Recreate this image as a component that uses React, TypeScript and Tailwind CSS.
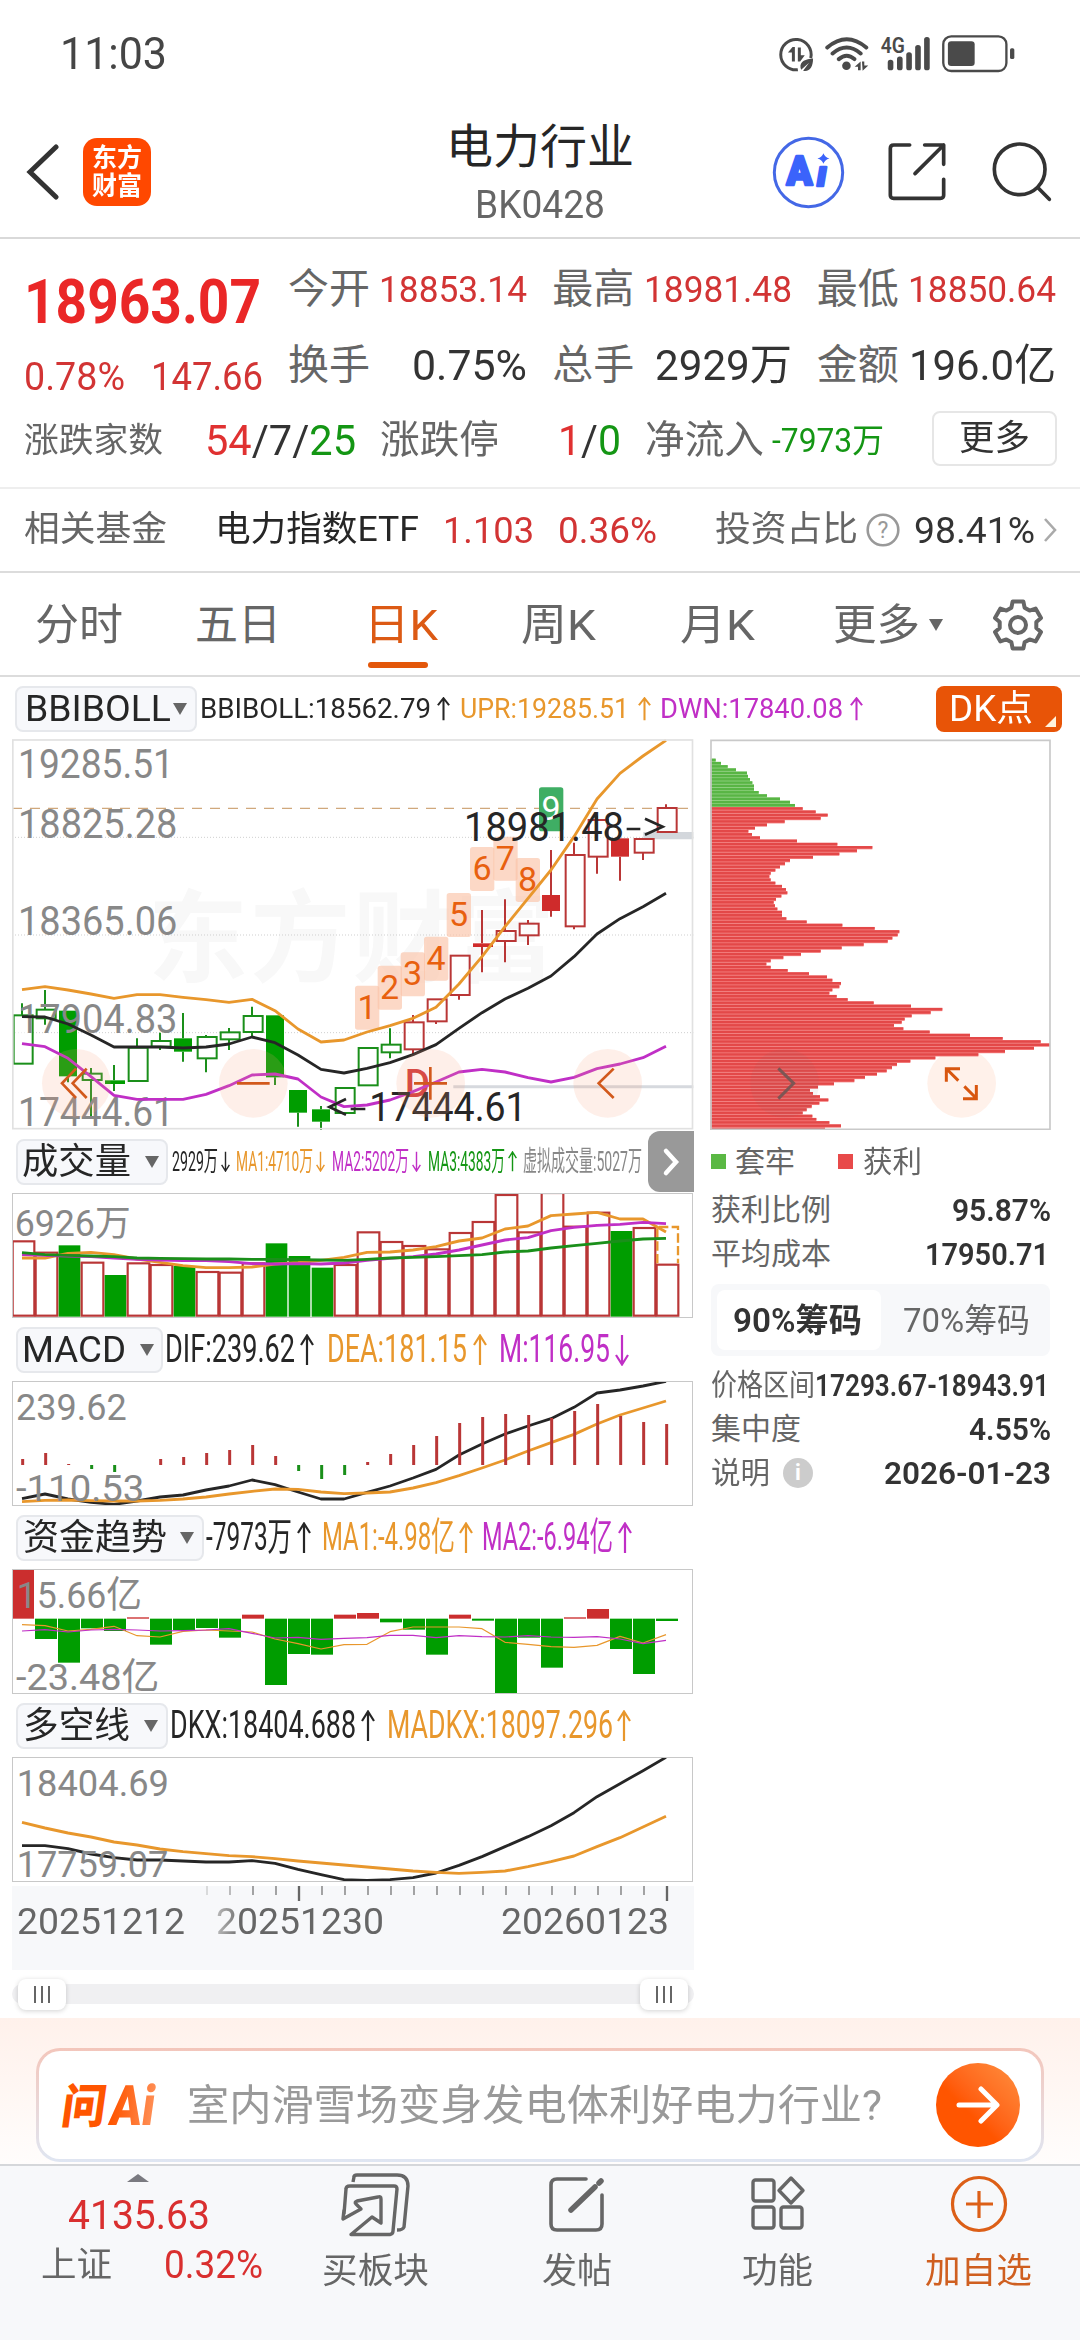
import { useLayoutEffect, useRef } from "react";
import type { ReactNode } from "react";

/* Single-line text squeezed or stretched horizontally to the width of its box. */
function Fit({ className = "", children }: { className?: string; children: ReactNode }) {
  const outer = useRef<HTMLSpanElement>(null);
  const inner = useRef<HTMLSpanElement>(null);
  useLayoutEffect(() => {
    const o = outer.current;
    const i = inner.current;
    if (!o || !i) return;
    i.style.transform = "none";
    const natural = i.getBoundingClientRect().width;
    const target = o.getBoundingClientRect().width;
    if (natural > 0) i.style.transform = `scaleX(${target / natural})`;
  });
  return (
    <span ref={outer} className={`block shrink-0 whitespace-nowrap leading-none ${className}`}>
      <span ref={inner} className="inline-block origin-left leading-none">
        {children}
      </span>
    </span>
  );
}

const RED = "#b93636";
const GREEN = "#1a8f1a";
const ORANGE = "#e8972c";
const MAGENTA = "#c02fc6";
const BLACK = "#262626";

/* Charts use three units per pixel; trading days are 69 units apart. */
const dayX = (i: number) => 66 + 69 * i;
const toPoints = (ys: number[]) => ys.map((y, i) => `${dayX(i)},${y}`).join(" ");

function Line({ ys, color, width = 8.5 }: { ys: number[]; color: string; width?: number }) {
  return <polyline points={toPoints(ys)} fill="none" stroke={color} strokeWidth={width} strokeLinejoin="round" />;
}

function Label({ x, y, w, size, children, color = "#888888" }: { x: number; y: number; w: number; size: number; children: string; color?: string }) {
  return (
    <text x={x} y={y} fontSize={size} fill={color} textLength={w} lengthAdjust="spacingAndGlyphs">
      {children}
    </text>
  );
}

/* high, body top, body bottom, low, kind: G/R filled, g/r hollow */
const candles: [number, number, number, number, string][] = [
  [820, 856, 1001, 1001, "g"], [780, 839, 865, 884, "g"], [842, 842, 1039, 1057, "G"], [1014, 1031, 1050, 1160, "g"],
  [1005, 1051, 1062, 1083, "G"], [925, 953, 1053, 1053, "g"], [908, 933, 950, 960, "g"], [849, 925, 965, 995, "G"],
  [915, 921, 985, 1027, "g"], [894, 907, 928, 960, "g"], [830, 858, 906, 920, "g"], [856, 856, 1042, 1065, "G"],
  [1080, 1080, 1148, 1190, "G"], [1128, 1138, 1175, 1200, "G"], [1073, 1074, 1149, 1149, "g"], [954, 954, 1066, 1066, "g"],
  [895, 944, 967, 985, "g"], [855, 877, 958, 974, "r"], [808, 808, 874, 882, "r"], [677, 677, 795, 809, "r"],
  [540, 640, 651, 727, "R"], [508, 603, 633, 697, "r"], [570, 581, 616, 645, "r"], [360, 495, 543, 560, "R"],
  [338, 375, 589, 598, "r"], [257, 270, 380, 431, "r"], [325, 325, 380, 452, "R"], [327, 327, 368, 390, "r"],
  [223, 234, 306, 306, "r"],
];
const upper = [779, 770, 780, 792, 805, 794, 794, 802, 809, 817, 808, 842, 897, 936, 930, 906, 887, 865, 832, 762, 680, 590, 505, 420, 320, 207, 130, 78, 31];
const middle = [860, 861, 882, 915, 951, 951, 951, 954, 951, 942, 921, 938, 975, 1018, 1029, 1015, 998, 974, 944, 895, 848, 807, 775, 738, 680, 612, 566, 530, 490];
const lower = [941, 950, 985, 1040, 1096, 1108, 1108, 1108, 1093, 1067, 1035, 1032, 1047, 1101, 1130, 1125, 1110, 1085, 1056, 1026, 1018, 1026, 1043, 1056, 1042, 1016, 1002, 983, 949];
const tags: [number, number][] = [
  [1065, 767], [1133, 707], [1202, 667], [1272, 620], [1340, 489], [1410, 351], [1480, 320], [1547, 384], [1617, 172],
];

function Circle({ x }: { x: number }) {
  return <circle cx={x} cy={1060} r={103} fill="#f9a37a" fillOpacity={0.17} />;
}

function MainChart() {
  return (
    <svg viewBox="36 27 2046 1173" className="block h-[391px] w-[682px]">
      <g fontSize={300} fontWeight={700} fill="#f8f8f8">
        {["东", "方", "财", "富"].map((c, i) => (
          <text key={c} x={444 + 307 * i} y={732} textLength={300} lengthAdjust="spacingAndGlyphs">{c}</text>
        ))}
      </g>
      <g stroke="#cfcfcf" strokeWidth={3} strokeDasharray="3 6">
        <path d="M36 322H2080M36 615H2080M36 908H2080" />
      </g>
      <path d="M1360 1070H2080" stroke="#d6d9de" strokeWidth={9} />
      <path d="M1930 317H2080" stroke="#d3d7dc" strokeWidth={22} />
      <path d="M36 235H2070" stroke="#d0a87c" strokeWidth={3.5} strokeDasharray="30 24" />
      {tags.map(([x, y], i) => (
        <g key={i}>
          <rect x={x} y={y} width={73} height={132} rx={8} fill={i === 8 ? "#3fae64" : "#fbc3a8"} fillOpacity={i === 8 ? 1 : 0.65} />
          <text x={x + 36} y={y + 99} fontSize={102} textAnchor="middle" fill={i === 8 ? "#ffffff" : "#e8600f"}>{i + 1}</text>
        </g>
      ))}
      {candles.map(([hi, top, bottom, lo, kind], i) => {
        const filled = kind === "G" || kind === "R";
        const up = kind === "r" || kind === "R";
        const edge = up ? RED : GREEN;
        const fill = filled ? (up ? "#cf2b2b" : "#009d00") : "#ffffff";
        const cx = dayX(i);
        return (
          <g key={i} stroke={edge} strokeWidth={6}>
            <path d={`M${cx} ${hi}V${top}M${cx} ${bottom}V${lo}`} />
            {filled ? (
              <rect x={cx - 27} y={top} width={bottom - top < 14 ? 60 : 54} height={bottom - top} fill={fill} stroke="none" />
            ) : (
              <rect x={cx - 25} y={top} width={57} height={bottom - top} fill="#ffffff" fillOpacity={0.6} />
            )}
          </g>
        );
      })}
      <Label x={54} y={145} w={468} size={124}>19285.51</Label>
      <Label x={54} y={323} w={478} size={124}>18825.28</Label>
      <Label x={54} y={614} w={478} size={124}>18365.06</Label>
      <Label x={54} y={908} w={478} size={124}>17904.83</Label>
      <Label x={54} y={1187} w={468} size={124}>17444.61</Label>
      <text x={1214} y={1102} fontSize={116} fontWeight={500} fill="#d03a3a">D</text>
      <Line ys={upper} color={ORANGE} />
      <Line ys={middle} color={BLACK} />
      <Line ys={lower} color={MAGENTA} />
      <Label x={1392} y={332} w={480} size={121} color={BLACK}>18981.48</Label>
      <path d="M1880 297H1921M1935 266L1988 290L1935 314" fill="none" stroke={BLACK} strokeWidth={8} />
      <Label x={1108} y={1172} w={472} size={121} color={BLACK}>17444.61</Label>
      <path d="M1052 1137H1096M1038 1107L988 1131L1038 1154" fill="none" stroke={BLACK} strokeWidth={8} />
      <Circle x={229} />
      <Circle x={760} />
      <Circle x={1292} />
      <Circle x={1823} />
      <g fill="none" stroke="#d2591c" strokeWidth={8}>
        <path d="M228 1016L186 1060L228 1104M260 1016L218 1060L260 1104" />
        <path d="M711 1060H809" />
        <path d="M1242 1060H1341M1291 1011V1109" />
        <path d="M1841 1016L1796 1060L1841 1104" />
      </g>
      <rect x={38.5} y={30} width={2039} height={1166} fill="none" stroke="#e1e1e1" strokeWidth={5} />
    </svg>
  );
}

/* Right edge of each price level's bar. */
const chips = [
  77, 93, 113, 138, 171, 174, 180, 187, 192, 192, 206, 231, 270, 300, 315, 338, 377, 413, 392, 284, 231, 195, 175, 186, 210, 321,
  442, 547, 501, 448, 369, 300, 285, 270, 256, 242, 238, 242, 256, 276, 288, 292, 274, 258, 251, 255, 262, 276, 276, 289, 350, 457,
  554, 628, 623, 607, 593, 521, 455, 392, 333, 280, 242, 229, 242, 293, 357, 411, 427, 453, 448, 427, 418, 440, 473, 551, 663, 757,
  722, 665, 644, 635, 612, 640, 719, 840, 938, 1052, 1080, 1032, 945, 865, 736, 661, 621, 606, 590, 561, 525, 493, 432, 384, 360,
  369, 390, 415, 388, 365, 350, 338, 367, 379, 418, 453, 405,
];

function ChipChart() {
  return (
    <svg viewBox="60 27 1023 1173" className="block h-[391px] w-[341px]">
      <circle cx={815} cy={1060} r={103} fill="#fff1ea" />
      {chips.map((x, i) => {
        const y = 86 + i * 9.71;
        return (
          <g key={i}>
            <rect x={62} y={y} width={x - 62} height={9.8} fill={i < 15 ? "#8fd07e" : "#f57f7f"} />
            <rect x={62} y={y} width={x - 62} height={7.4} fill={i < 15 ? "#58b544" : "#e34848"} />
          </g>
        );
      })}
      <circle cx={284} cy={1060} r={103} fill="#777777" fillOpacity={0.07} />
      <path d="M265 1015L311 1060L265 1106" fill="none" stroke="#7d5654" strokeWidth={9} />
      <g fill="none" stroke="#d8560f" strokeWidth={9}>
        <path d="M769 1055V1016H810M770 1017L805 1052M823 1069L858 1104M859 1065V1106H819" />
      </g>
      <path d="M63 31V1198H1080V31Z" fill="none" stroke="#c9c9c9" strokeWidth={5} />
    </svg>
  );
}

function Panel({ top, children }: { top: number; children: ReactNode }) {
  return (
    <svg viewBox={`36 ${top} 2046 375`} className="block h-[125px] w-[682px]">
      {children}
      <rect x={37.5} y={top + 1.5} width={2040} height={372} fill="none" stroke="#c8c8c8" strokeWidth={3} />
    </svg>
  );
}

const volume = [334, 368, 346, 398, 435, 400, 405, 408, 426, 428, 400, 340, 378, 413, 405, 307, 336, 348, 358, 309, 276, 195, 307, 189, 290, 248, 303, 294, 404];
const volumeDown = [2, 4, 7, 11, 12, 13, 26];
const vol1 = [384, 384, 370, 367, 374, 387, 397, 407, 413, 413, 411, 402, 398, 391, 382, 367, 366, 360, 350, 333, 324, 297, 288, 257, 252, 247, 267, 267, 306];
const vol2 = [374, 376, 378, 380, 384, 388, 390, 392, 392, 395, 401, 402, 401, 402, 399, 391, 385, 380, 372, 360, 345, 330, 323, 302, 292, 286, 283, 277, 281];
const vol3 = [368, 374, 376, 378, 380, 384, 385, 386, 387, 387, 388, 388, 389, 390, 391, 388, 384, 382, 380, 377, 374, 366, 363, 354, 347, 340, 333, 327, 325];

function VolumeChart() {
  return (
    <Panel top={189}>
      <Label x={44} y={318} w={348} size={110}>6926万</Label>
      {volume.map((y, i) =>
        volumeDown.includes(i) ? (
          <rect key={i} x={38 + 69 * i} y={y} width={65} height={560 - y} fill="#009d00" />
        ) : (
          <rect key={i} x={38 + 69 * i} y={y} width={65} height={557 - y} fill="#ffffff" stroke={RED} strokeWidth={6.5} />
        ),
      )}
      <path d="M1972 400V291H2034V400" fill="none" stroke={ORANGE} strokeWidth={7} strokeDasharray="28 10" />
      <Line ys={vol1} color={ORANGE} />
      <Line ys={vol2} color={MAGENTA} />
      <Line ys={vol3} color={GREEN} />
    </Panel>
  );
}

const macd = [417, 399, 432, 447, 456, 435, 417, 411, 399, 390, 375, 408, 453, 477, 465, 426, 402, 375, 348, 309, 291, 282, 285, 294, 273, 252, 288, 306, 312];
const dif = [536, 522, 537, 547, 553, 543, 531, 525, 510, 498, 480, 494, 516, 537, 537, 517, 498, 474, 448, 405, 372, 342, 318, 296, 262, 219, 210, 198, 184];
const dea = [545, 541, 540, 542, 543, 543, 541, 537, 531, 522, 514, 507, 508, 516, 521, 519, 516, 504, 488, 467, 444, 420, 393, 368, 343, 312, 285, 264, 243];

function MacdChart() {
  return (
    <Panel top={183}>
      <Line ys={dif} color={BLACK} />
      <Line ys={dea} color={ORANGE} />
      {macd.map((y, i) => (
        <path key={i} d={`M${dayX(i) + 2} 435V${y}`} stroke={y > 435 ? GREEN : RED} strokeWidth={9} />
      ))}
      <Label x={48} y={299} w={332} size={112}>239.62</Label>
      <Label x={48} y={543} w={385} size={112}>-110.53</Label>
    </Panel>
  );
}

const fund = [57, 267, 338, 235, 243, 202, 284, 240, 234, 263, 194, 405, 312, 314, 194, 189, 217, 239, 314, 194, 212, 429, 263, 353, 202, 177, 297, 372, 213];
const fund1 = [224, 227, 243, 238, 229, 257, 261, 244, 240, 243, 246, 267, 281, 297, 284, 283, 245, 231, 231, 231, 236, 277, 283, 290, 292, 286, 259, 279, 254];
const fund2 = [243, 239, 246, 240, 238, 240, 243, 242, 240, 236, 250, 264, 262, 268, 265, 263, 256, 256, 263, 257, 260, 261, 257, 261, 262, 260, 267, 281, 271];

function FundChart() {
  return (
    <Panel top={57}>
      {fund.map((y, i) => (
        <rect key={i} x={36 + 69 * i} y={Math.min(y, 206)} width={66} height={Math.abs(206 - y)} fill={y < 206 ? "#cb2e2e" : "#009d00"} />
      ))}
      <Line ys={fund1} color={ORANGE} width={3.5} />
      <Line ys={fund2} color={MAGENTA} width={3.5} />
      <Label x={50} y={175} w={376} size={112}>15.66亿</Label>
      <Label x={48} y={420} w={430} size={112}>-23.48亿</Label>
    </Panel>
  );
}

const dkx = [887, 887, 896, 912, 923, 930, 930, 933, 936, 936, 932, 940, 958, 974, 989, 991, 989, 983, 969, 946, 920, 890, 860, 827, 788, 740, 701, 662, 622];
const madkx = [817, 834, 849, 861, 876, 885, 897, 905, 911, 917, 920, 926, 933, 939, 945, 951, 957, 963, 967, 970, 967, 963, 950, 935, 918, 890, 863, 831, 799];

function DkxChart() {
  return (
    <Panel top={621}>
      <Line ys={dkx} color={BLACK} />
      <Line ys={madkx} color={ORANGE} />
      <Label x={50} y={738} w={457} size={112}>18404.69</Label>
      <Label x={50} y={980} w={455} size={112}>17759.07</Label>
    </Panel>
  );
}

function Arrow({ down = false, className }: { down?: boolean; className: string }) {
  return (
    <svg viewBox="0 0 14 32" fill="none" stroke="currentColor" strokeWidth={2.2} preserveAspectRatio="none" className={`shrink-0 ${className}`}>
      {down ? <path d="M7 1V30M1 21L7 30.5L13 21" /> : <path d="M7 31V2M1 11L7 1.5L13 11" />}
    </svg>
  );
}

function Pill({ className, textClass, triClass, children }: { className: string; textClass: string; triClass: string; children: string }) {
  return (
    <div className={`flex h-[46px] shrink-0 items-center rounded-lg border-2 border-[#e6e8ec] bg-[#f7f8fb] text-[#262626] ${className}`}>
      <Fit className={textClass}>{children}</Fit>
      <svg viewBox="0 0 14 12" className={`h-3 w-[14px] fill-[#666666] ${triClass}`}>
        <path d="M0 0H14L7 12Z" />
      </svg>
    </div>
  );
}

const gear = (() => {
  const p: string[] = [];
  const at = (deg: number, r: number) => {
    const a = (deg * Math.PI) / 180;
    p.push(`${(26 + r * Math.cos(a)).toFixed(1)},${(26 + r * Math.sin(a)).toFixed(1)}`);
  };
  for (let k = 0; k < 6; k++) {
    const c = -90 + 60 * k;
    at(c - 21, 18.5);
    at(c - 13, 24);
    at(c + 13, 24);
    at(c + 21, 18.5);
  }
  return p.join(" ");
})();

function StatusBar() {
  return (
    <div className="flex h-[107px] items-center pl-[60px] text-[#454545]">
      <Fit className="w-[107px] text-[44px]">11:03</Fit>
      <svg viewBox="50 35 720 118" className="ml-[610px] h-[39px] w-[240px]">
        <path d="M149 108A46 46 0 1 0 110 143" fill="none" stroke="#4a4a4a" strokeWidth={9} />
        <g fill="#4a4a4a">
          <path d="M101 118H92V91H80L94 74H101Z" />
          <path d="M110 76H119V99H131L117 118H110Z" />
          <path d="M118 136C116 118 134 110 156 109C156 134 146 150 126 146L144 122L120 143Z" />
        </g>
        <g fill="none" stroke="#4a4a4a" strokeWidth={12} strokeLinecap="round">
          <path d="M199 76Q258 26 317 76M215 94Q258 58 300 94M234 111Q258 91 281 111" />
        </g>
        <circle cx={257} cy={131} r={13} fill="#4a4a4a" />
        <path d="M282 134L300 118V145H292V134ZM304 118H311V130H323L306 146Z" fill="#4a4a4a" />
        <text x={361} y={94} fontSize={64} fontWeight={600} fill="#4a4a4a" textLength={73} lengthAdjust="spacingAndGlyphs">4G</text>
        <g fill="#4a4a4a">
          <rect x={382} y={113} width={17} height={32} rx={8} />
          <rect x={410} y={103} width={17} height={42} rx={8} />
          <rect x={438} y={90} width={17} height={55} rx={8} />
          <rect x={465} y={68} width={17} height={77} rx={8} />
          <rect x={492} y={44} width={17} height={101} rx={8} />
          <rect x={564} y={57} width={81} height={75} rx={10} />
          <rect x={752} y={78} width={13} height={33} rx={5} />
        </g>
        <rect x={550} y={42} width={191} height={105} rx={24} fill="none" stroke="#4a4a4a" strokeWidth={7} />
      </svg>
    </div>
  );
}

function Header() {
  return (
    <header className="flex h-[132px] border-b-2 border-[#d9d9d9]">
      <div className="flex w-[330px] items-center pl-[26px]">
        <svg viewBox="0 0 33 58" className="h-[58px] w-[33px]" fill="none" stroke="#333333" strokeWidth={5} strokeLinecap="round">
          <path d="M30 4L4 29L30 54" />
        </svg>
        <div className="ml-6 flex h-[68px] w-[68px] flex-col items-center justify-center gap-0.5 rounded-[14px] bg-[#ff4800] text-[26px] font-semibold text-white">
          <Fit className="w-[50px]">东方</Fit>
          <Fit className="w-[50px]">财富</Fit>
        </div>
      </div>
      <div className="flex flex-1 flex-col items-center pt-[16px]">
        <Fit className="w-[188px] text-[47px] text-[#262626]">电力行业</Fit>
        <Fit className="mt-[16px] w-[130px] text-[38px] text-[#666666]">BK0428</Fit>
      </div>
      <div className="flex w-[330px] items-center pl-[22px]">
        <svg viewBox="36 344 220 220" className="h-[73px] w-[73px]">
          <circle cx={146} cy={454} r={103} fill="none" stroke="#4468e6" strokeWidth={9} />
          <g fill="#3b63fb" stroke="#3b63fb" strokeWidth={8} strokeLinejoin="round" fontWeight={900}>
            <text x={80} y={492} fontSize={122} textLength={78} lengthAdjust="spacingAndGlyphs">A</text>
            <text x={172} y={496} fontSize={105} fontStyle="italic">ı</text>
          </g>
          <path d="M191 396Q195 408 209 412Q195 416 191 428Q187 416 173 412Q187 408 191 396Z" fill="#3b63fb" />
        </svg>
        <svg viewBox="380 365 180 180" className="ml-[42px] h-[60px] w-[60px]" fill="none" stroke="#333333" strokeWidth={11} strokeLinecap="round" strokeLinejoin="round">
          <path d="M448 374H400Q390 374 390 384V525Q390 534 400 534H540Q550 534 550 525V477M493 374H550V432M550 374L464 460" />
        </svg>
        <svg viewBox="690 360 186 186" className="ml-11 h-[62px] w-[62px]" fill="none" stroke="#333333" strokeWidth={11} strokeLinecap="round">
          <circle cx={776} cy={445} r={76} />
          <path d="M831 500L865 535" />
        </svg>
      </div>
    </header>
  );
}

function Stat({ label, value, valueClass }: { label: string; value: string; valueClass: string }) {
  return (
    <div className="flex h-[42px] items-center justify-between">
      <Fit className="w-[82px] text-[41px] text-[#666666]">{label}</Fit>
      <Fit className={valueClass}>{value}</Fit>
    </div>
  );
}

function Quote() {
  return (
    <section className="h-[250px] border-b-2 border-[#eeeeee]">
      <div className="flex h-[163px] pl-[24px]">
        <div className="w-[264px] pt-[32px]">
          <Fit className="w-[237px] text-[62px] font-bold text-[#ea2727]">18963.07</Fit>
          <div className="mt-[25px] flex gap-[26px] text-[39px] text-[#d23434]">
            <Fit className="w-[101px]">0.78%</Fit>
            <Fit className="w-[112px]">147.66</Fit>
          </div>
        </div>
        <div className="grid w-[768px] grid-cols-3 content-start gap-x-[25px] gap-y-[34px] pt-[29px]">
          <Stat label="今开" value="18853.14" valueClass="w-[148px] text-[37px] text-[#d23434]" />
          <Stat label="最高" value="18981.48" valueClass="w-[148px] text-[37px] text-[#d23434]" />
          <Stat label="最低" value="18850.64" valueClass="w-[148px] text-[37px] text-[#d23434]" />
          <Stat label="换手" value="0.75%" valueClass="w-[115px] text-[43px] text-[#333333]" />
          <Stat label="总手" value="2929万" valueClass="w-[137px] text-[43px] text-[#333333]" />
          <Stat label="金额" value="196.0亿" valueClass="w-[147px] text-[43px] text-[#333333]" />
        </div>
      </div>
      <div className="flex h-[72px] items-center pl-[24px]">
        <Fit className="mt-1 w-[139px] text-[34.5px] text-[#666666]">涨跌家数</Fit>
        <Fit className="mt-1 ml-[42px] w-[151px] text-[43px] text-[#333333]">
          <span className="text-[#e03131]">54</span>/7/<span className="text-[#149614]">25</span>
        </Fit>
        <Fit className="mt-1 ml-6 w-[119px] text-[39px] text-[#666666]">涨跌停</Fit>
        <Fit className="mt-1 ml-[59px] w-[63px] text-[43px] text-[#333333]">
          <span className="text-[#e03131]">1</span>/<span className="text-[#149614]">0</span>
        </Fit>
        <Fit className="mt-1 ml-6 w-[119px] text-[39px] text-[#666666]">净流入</Fit>
        <Fit className="mt-1 ml-2 w-[112px] text-[33px] text-[#149614]">-7973万</Fit>
        <div className="ml-12 flex h-[55px] w-[125px] items-center justify-center rounded-lg border-2 border-[#e6e6e6] text-[#333333]">
          <Fit className="w-[71px] text-[35px]">更多</Fit>
        </div>
      </div>
    </section>
  );
}

function FundRow() {
  return (
    <section className="flex h-[84px] items-center border-b-2 border-[#dcdcdc] pl-6">
      <Fit className="w-[143px] text-[35.5px] text-[#666666]">相关基金</Fit>
      <Fit className="ml-[48px] w-[204px] text-[35.5px] text-[#262626]">电力指数ETF</Fit>
      <Fit className="ml-[24px] w-[91px] text-[37px] text-[#d23434]">1.103</Fit>
      <Fit className="ml-[24px] w-[99px] text-[37px] text-[#d23434]">0.36%</Fit>
      <Fit className="ml-[58px] w-[143px] text-[35.5px] text-[#666666]">投资占比</Fit>
      <svg viewBox="0 0 34 34" className="ml-2 h-[34px] w-[34px]">
        <circle cx={17} cy={17} r={15.3} fill="none" stroke="#999999" strokeWidth={2.6} />
        <text x={17} y={25} fontSize={23} fill="#999999" textAnchor="middle">?</text>
      </svg>
      <Fit className="ml-[14px] w-[121px] text-[37px] text-[#333333]">98.41%</Fit>
      <svg viewBox="0 0 14 26" className="ml-2 h-[26px] w-[14px]" fill="none" stroke="#aaaaaa" strokeWidth={2.6}>
        <path d="M2 2L12 13L2 24" />
      </svg>
    </section>
  );
}

function Tabs() {
  return (
    <nav className="flex h-[104px] items-center border-b-2 border-[#dcdcdc] pt-0.5 pl-[35px] text-[43px] text-[#666666]">
      <Fit className="w-[88px]">分时</Fit>
      <Fit className="ml-[72px] w-[86px]">五日</Fit>
      <div className="relative ml-[83px] text-[#dc5a14]">
        <Fit className="w-[74px]">日K</Fit>
        <div className="absolute top-[58px] left-[4px] h-[6px] w-[60px] rounded-full bg-[#e3570a]" />
      </div>
      <Fit className="ml-[83px] w-[75px]">周K</Fit>
      <Fit className="ml-[84px] w-[75px]">月K</Fit>
      <Fit className="ml-[78px] w-[87px]">更多</Fit>
      <svg viewBox="0 0 14 12" className="ml-[9px] h-3 w-[14px] fill-[#666666]">
        <path d="M0 0H14L7 12Z" />
      </svg>
      <svg viewBox="0 0 52 52" className="ml-[49px] h-[52px] w-[52px]" fill="none" stroke="#666666" strokeWidth={4} strokeLinejoin="round">
        <polygon points={gear} />
        <circle cx={26} cy={26} r={8} />
      </svg>
    </nav>
  );
}

function IndicatorRow() {
  return (
    <div className="flex h-[62px] items-center pt-px pl-[15px] text-[28px]">
      <Pill className="w-[182px] pl-[8px]" textClass="w-[146px] text-[37px]" triClass="ml-[2px]">BBIBOLL</Pill>
      <Fit className="ml-[3px] w-[231px] text-[#262626]">BBIBOLL:18562.79</Fit>
      <Arrow className="ml-[6px] h-6 w-[13px] text-[#262626]" />
      <Fit className="ml-[10px] w-[169px] text-[#e8972c]">UPR:19285.51</Fit>
      <Arrow className="ml-[9px] h-6 w-[13px] text-[#e8972c]" />
      <Fit className="ml-[9px] w-[183px] text-[#c02fc6]">DWN:17840.08</Fit>
      <Arrow className="ml-[7px] h-6 w-[13px] text-[#c02fc6]" />
      <div className="ml-[73px] flex h-[46px] w-[126px] items-center rounded-lg bg-[#e85407] pl-[13px] text-white">
        <Fit className="w-[84px] text-[36px]">DK点</Fit>
        <svg viewBox="0 0 11 11" className="mb-[5px] ml-3 h-[11px] w-[11px] self-end fill-[#fff2dd]">
          <path d="M11 0V11H0Z" />
        </svg>
      </div>
    </div>
  );
}

function DateStrip() {
  return (
    <div className="mt-1 h-[84px] bg-[#f7f8fa]">
      <svg viewBox="36 0 2046 54" className="block h-[18px] w-[682px]" stroke="#666666">
        {Array.from({ length: 21 }, (_, k) => k + 8).map((i) => {
          const major = i === 12 || i === 28;
          return <path key={i} d={`M${dayX(i) + 3} 0V${major ? 45 : 27}`} strokeWidth={major ? 7 : 3.5} opacity={i === 8 ? 0.35 : i === 9 ? 0.7 : 1} />;
        })}
      </svg>
      <div className="flex pl-[5px] text-[36.5px] text-[#666666]">
        <Fit className="w-[168px]">20251212</Fit>
        <Fit className="ml-[31px] w-[168px]"><span className="bg-linear-to-r from-[#bbbbbb] to-[#777777] bg-clip-text text-transparent">2</span>0251230</Fit>
        <Fit className="ml-[117px] w-[168px]">20260123</Fit>
      </div>
    </div>
  );
}

function Knob() {
  return (
    <div className="flex h-[31px] w-[48px] items-center justify-center gap-[5px] rounded-lg bg-white shadow-[0_1px_5px_rgba(0,0,0,0.18)]">
      <div className="h-[17px] w-[2px] bg-[#666666]" />
      <div className="h-[17px] w-[2px] bg-[#666666]" />
      <div className="h-[17px] w-[2px] bg-[#666666]" />
    </div>
  );
}

function LeftColumn() {
  return (
    <div className="ml-3 w-[682px]">
      <MainChart />
      <div className="flex h-[63px] items-center pl-1 text-[28px]">
        <Pill className="w-[152px] pl-[4px]" textClass="w-[109px] text-[36px]" triClass="ml-[14px]">成交量</Pill>
        <Fit className="ml-[4px] w-[46px] text-[#262626]">2929万</Fit>
        <Arrow down className="ml-[3px] h-[21px] w-[9px] text-[#262626]" />
        <Fit className="ml-[6px] w-[77px] text-[#e8972c]">MA1:4710万</Fit>
        <Arrow down className="ml-[3px] h-[21px] w-[9px] text-[#e8972c]" />
        <Fit className="ml-[7px] w-[77px] text-[#c02fc6]">MA2:5202万</Fit>
        <Arrow down className="ml-[3px] h-[21px] w-[9px] text-[#c02fc6]" />
        <Fit className="ml-[7px] w-[77px] text-[#149614]">MA3:4383万</Fit>
        <Arrow className="ml-[3px] h-[21px] w-[9px] text-[#149614]" />
        <Fit className="ml-[6px] w-[119px] text-[#888888]">虚拟成交量:5027万</Fit>
        <div className="ml-auto flex h-[61px] w-[46px] items-center justify-center rounded-l-xl bg-[#999999]">
          <svg viewBox="0 0 18 30" className="h-[30px] w-[18px]" fill="none" stroke="#ffffff" strokeWidth={4.5} strokeLinecap="round">
            <path d="M4 4L14 15L4 26" />
          </svg>
        </div>
      </div>
      <VolumeChart />
      <div className="flex h-[63px] items-center pl-1 text-[39px]">
        <Pill className="w-[147px] pl-[4px]" textClass="w-[104px] text-[37px]" triClass="ml-[14px]">MACD</Pill>
        <Fit className="ml-[2px] w-[130px] text-[#262626]">DIF:239.62</Fit>
        <Arrow className="ml-[5px] h-8 w-[14px] text-[#262626]" />
        <Fit className="ml-[13px] w-[140px] text-[#e8972c]">DEA:181.15</Fit>
        <Arrow className="ml-[6px] h-8 w-[14px] text-[#e8972c]" />
        <Fit className="ml-[12px] w-[111px] text-[#c02fc6]">M:116.95</Fit>
        <Arrow down className="ml-[5px] h-8 w-[14px] text-[#c02fc6]" />
      </div>
      <MacdChart />
      <div className="flex h-[63px] items-center pl-1 text-[39px]">
        <Pill className="w-[188px] pl-[5px]" textClass="w-[144px] text-[36px]" triClass="ml-[13px]">资金趋势</Pill>
        <Fit className="ml-[2px] w-[86px] text-[#262626]">-7973万</Fit>
        <Arrow className="ml-[5px] h-8 w-[14px] text-[#262626]" />
        <Fit className="ml-[11px] w-[133px] text-[#e8972c]">MA1:-4.98亿</Fit>
        <Arrow className="ml-[4px] h-8 w-[14px] text-[#e8972c]" />
        <Fit className="ml-[9px] w-[131px] text-[#c02fc6]">MA2:-6.94亿</Fit>
        <Arrow className="ml-[5px] h-8 w-[14px] text-[#c02fc6]" />
      </div>
      <FundChart />
      <div className="flex h-[63px] items-center pl-1 text-[39px]">
        <Pill className="w-[152px] pl-[5px]" textClass="w-[107px] text-[36px]" triClass="ml-[14px]">多空线</Pill>
        <Fit className="ml-[2px] w-[186px] text-[#262626]">DKX:18404.688</Fit>
        <Arrow className="ml-[5px] h-8 w-[14px] text-[#262626]" />
        <Fit className="ml-[12px] w-[226px] text-[#e8972c]">MADKX:18097.296</Fit>
        <Arrow className="ml-[4px] h-8 w-[14px] text-[#e8972c]" />
      </div>
      <DkxChart />
      <DateStrip />
      <div className="flex h-[48px] items-center">
        <div className="flex h-[20px] w-[682px] items-center justify-between rounded-full bg-[#f0f0f2] px-[6px]">
          <Knob />
          <Knob />
        </div>
      </div>
    </div>
  );
}

function InfoRow({ label, labelClass, value, valueClass, info = false }: { label: string; labelClass: string; value: string; valueClass: string; info?: boolean }) {
  return (
    <div className="flex h-11 items-center">
      <Fit className={`text-[30px] text-[#666666] ${labelClass}`}>{label}</Fit>
      {info && (
        <div className="ml-[13px] flex h-[30px] w-[30px] items-center justify-center rounded-full bg-[#cccccc] text-[22px] leading-none font-bold text-white">i</div>
      )}
      <Fit className={`ml-auto text-[31px] font-semibold text-[#333333] ${valueClass}`}>{value}</Fit>
    </div>
  );
}

function RightColumn() {
  return (
    <div className="ml-4 w-[341px]">
      <ChipChart />
      <div className="flex h-[58px] items-center pt-[5px] pl-[1px] text-[30px] text-[#666666]">
        <div className="h-[15px] w-[15px] bg-[#5ab844]" />
        <Fit className="ml-[9px] w-[60px]">套牢</Fit>
        <div className="ml-[43px] h-[15px] w-[15px] bg-[#e84a4a]" />
        <Fit className="ml-[10px] w-[59px]">获利</Fit>
      </div>
      <div className="pl-[1px]">
        <InfoRow label="获利比例" labelClass="w-[120px]" value="95.87%" valueClass="w-[99px]" />
        <InfoRow label="平均成本" labelClass="w-[120px]" value="17950.71" valueClass="mr-[2px] w-[124px]" />
      </div>
      <div className="mt-[8px] ml-[1px] flex h-[72px] w-[339px] items-center rounded-lg bg-[#f7f8fa] px-[6px] text-[33px]">
        <div className="flex h-[60px] w-[164px] items-center justify-center rounded-lg bg-white pr-1 text-[#333333]">
          <Fit className="w-[129px] font-semibold">90%筹码</Fit>
        </div>
        <div className="flex flex-1 items-center justify-center pl-2 text-[#666666]">
          <Fit className="w-[127px]">70%筹码</Fit>
        </div>
      </div>
      <div className="mt-[7px] pl-[1px]">
        <InfoRow label="价格区间" labelClass="w-[104px]" value="17293.67-18943.91" valueClass="mr-[2px] w-[234px]" />
        <InfoRow label="集中度" labelClass="w-[90px]" value="4.55%" valueClass="w-[82px]" />
        <InfoRow label="说明" labelClass="w-[59px]" value="2026-01-23" valueClass="w-[167px]" info />
      </div>
    </div>
  );
}

function AskBar() {
  return (
    <section className="h-[146px] bg-linear-to-b from-[#fff1eb] to-[#fffdfc] px-9 pt-[30px]">
      <div className="rounded-[24px] bg-linear-to-b from-[#f3c6bb] to-[#dfe6f2] p-[3px]">
        <div className="flex h-[108px] items-center rounded-[21px] bg-white pl-5">
          <svg viewBox="0 0 100 48" className="h-12 w-[100px]">
            <defs>
              <linearGradient id="ask" gradientUnits="userSpaceOnUse" x1="0" y1="0" x2="100" y2="0">
                <stop offset="0.5" stopColor="#ff5500" />
                <stop offset="1" stopColor="#ff9a66" />
              </linearGradient>
            </defs>
            <g fill="url(#ask)" fontWeight={900} transform="translate(7 0) skewX(-8)">
              <text x={0} y={42} fontSize={47} textLength={44} lengthAdjust="spacingAndGlyphs">问</text>
              <text x={48} y={44} fontSize={56} textLength={45} lengthAdjust="spacingAndGlyphs">Ai</text>
            </g>
          </svg>
          <Fit className="mt-0.5 ml-[28px] w-[695px] text-[42px] text-[#999999]">室内滑雪场变身发电体利好电力行业?</Fit>
          <div className="ml-[54px] flex h-[84px] w-[84px] items-center justify-center rounded-full bg-linear-to-bl from-[#ff8f3d] to-[#ff5500] to-60%">
            <svg viewBox="0 0 44 40" className="h-10 w-11" fill="none" stroke="#ffffff" strokeWidth={5} strokeLinecap="round" strokeLinejoin="round">
              <path d="M3 20H40M25 4L41 20L25 36" />
            </svg>
          </div>
        </div>
      </div>
    </section>
  );
}

function NavItem({ label, labelClass, children }: { label: string; labelClass: string; children: ReactNode }) {
  return (
    <div className="flex w-[201px] flex-col items-center pt-[4px]">
      {children}
      <Fit className={`mt-[16px] text-[35px] ${labelClass}`}>{label}</Fit>
    </div>
  );
}

function BottomNav() {
  return (
    <footer className="flex h-[176px] border-t-2 border-[#d5d7da] bg-[#f7f8fa] text-[#666666]">
      <div className="w-[275px]">
        <svg viewBox="0 0 22 8" className="mt-2 ml-[127px] h-2 w-[22px] fill-[#7a7a80]">
          <path d="M0 8L11 0L22 8Z" />
        </svg>
        <Fit className="mt-[13px] ml-[68px] w-[142px] text-[41px] text-[#d92f2f]">4135.63</Fit>
        <div className="mt-[10px] flex items-center pl-[41px]">
          <Fit className="w-[71px] text-[35px]">上证</Fit>
          <Fit className="ml-[52px] w-[99px] text-[38px] text-[#d92f2f]">0.32%</Fit>
        </div>
      </div>
      <NavItem label="买板块" labelClass="w-[107px]">
        <svg viewBox="338 2170 76 68" className="h-[68px] w-[76px]" fill="none" stroke="#666666" strokeWidth={3.4} strokeLinejoin="round">
          <path d="M353 2182L354 2177Q354 2175 357 2175H397Q408 2175 408 2186L404 2227Q403 2230 397 2230" />
          <path d="M344 2214L346 2189Q346 2186 350 2186H394Q397 2186 397 2189L393 2231Q393 2234 390 2234.500H351L372 2217L381 2223V2199Q381 2196 378 2197L357 2201Q354 2202 356 2204L361 2209L343 2219L344 2210" />
        </svg>
      </NavItem>
      <NavItem label="发帖" labelClass="w-[70px]">
        <svg viewBox="0 0 68 68" className="h-[68px] w-[68px]" fill="none" stroke="#666666" strokeWidth={3.6} strokeLinecap="round">
          <path d="M43 9H14Q8 9 8 15V54Q8 60 14 60H53Q59 60 59 54V25" />
          <path d="M28 40L52 17M56 13L58 11" strokeWidth={5.5} />
        </svg>
      </NavItem>
      <NavItem label="功能" labelClass="w-[71px]">
        <svg viewBox="0 0 68 68" className="h-[68px] w-[68px]" fill="none" stroke="#666666" strokeWidth={3.4} strokeLinejoin="round">
          <rect x={9} y={10} width={21} height={21} rx={2.500} />
          <path d="M47 8L59 20.500L47 33L35 20.500Z" />
          <rect x={9} y={37} width={21} height={21} rx={2.500} />
          <rect x={37} y={37} width={21} height={21} rx={2.500} />
        </svg>
      </NavItem>
      <NavItem label="加自选" labelClass="w-[107px] text-[#cf5f20]">
        <svg viewBox="0 0 68 68" className="h-[68px] w-[68px]" fill="none" stroke="#dc5f17" strokeWidth={3.2}>
          <circle cx={34} cy={34} r={26.500} />
          <path d="M21 34H48M34 21V48" />
        </svg>
      </NavItem>
    </footer>
  );
}

export default function App() {
  return (
    <div className="h-[2340px] w-[1080px] overflow-hidden bg-white font-[Roboto,'Noto_Sans_CJK_SC',sans-serif]">
      <StatusBar />
      <Header />
      <Quote />
      <FundRow />
      <Tabs />
      <IndicatorRow />
      <main className="flex h-[1279px]">
        <LeftColumn />
        <RightColumn />
      </main>
      <AskBar />
      <BottomNav />
    </div>
  );
}
